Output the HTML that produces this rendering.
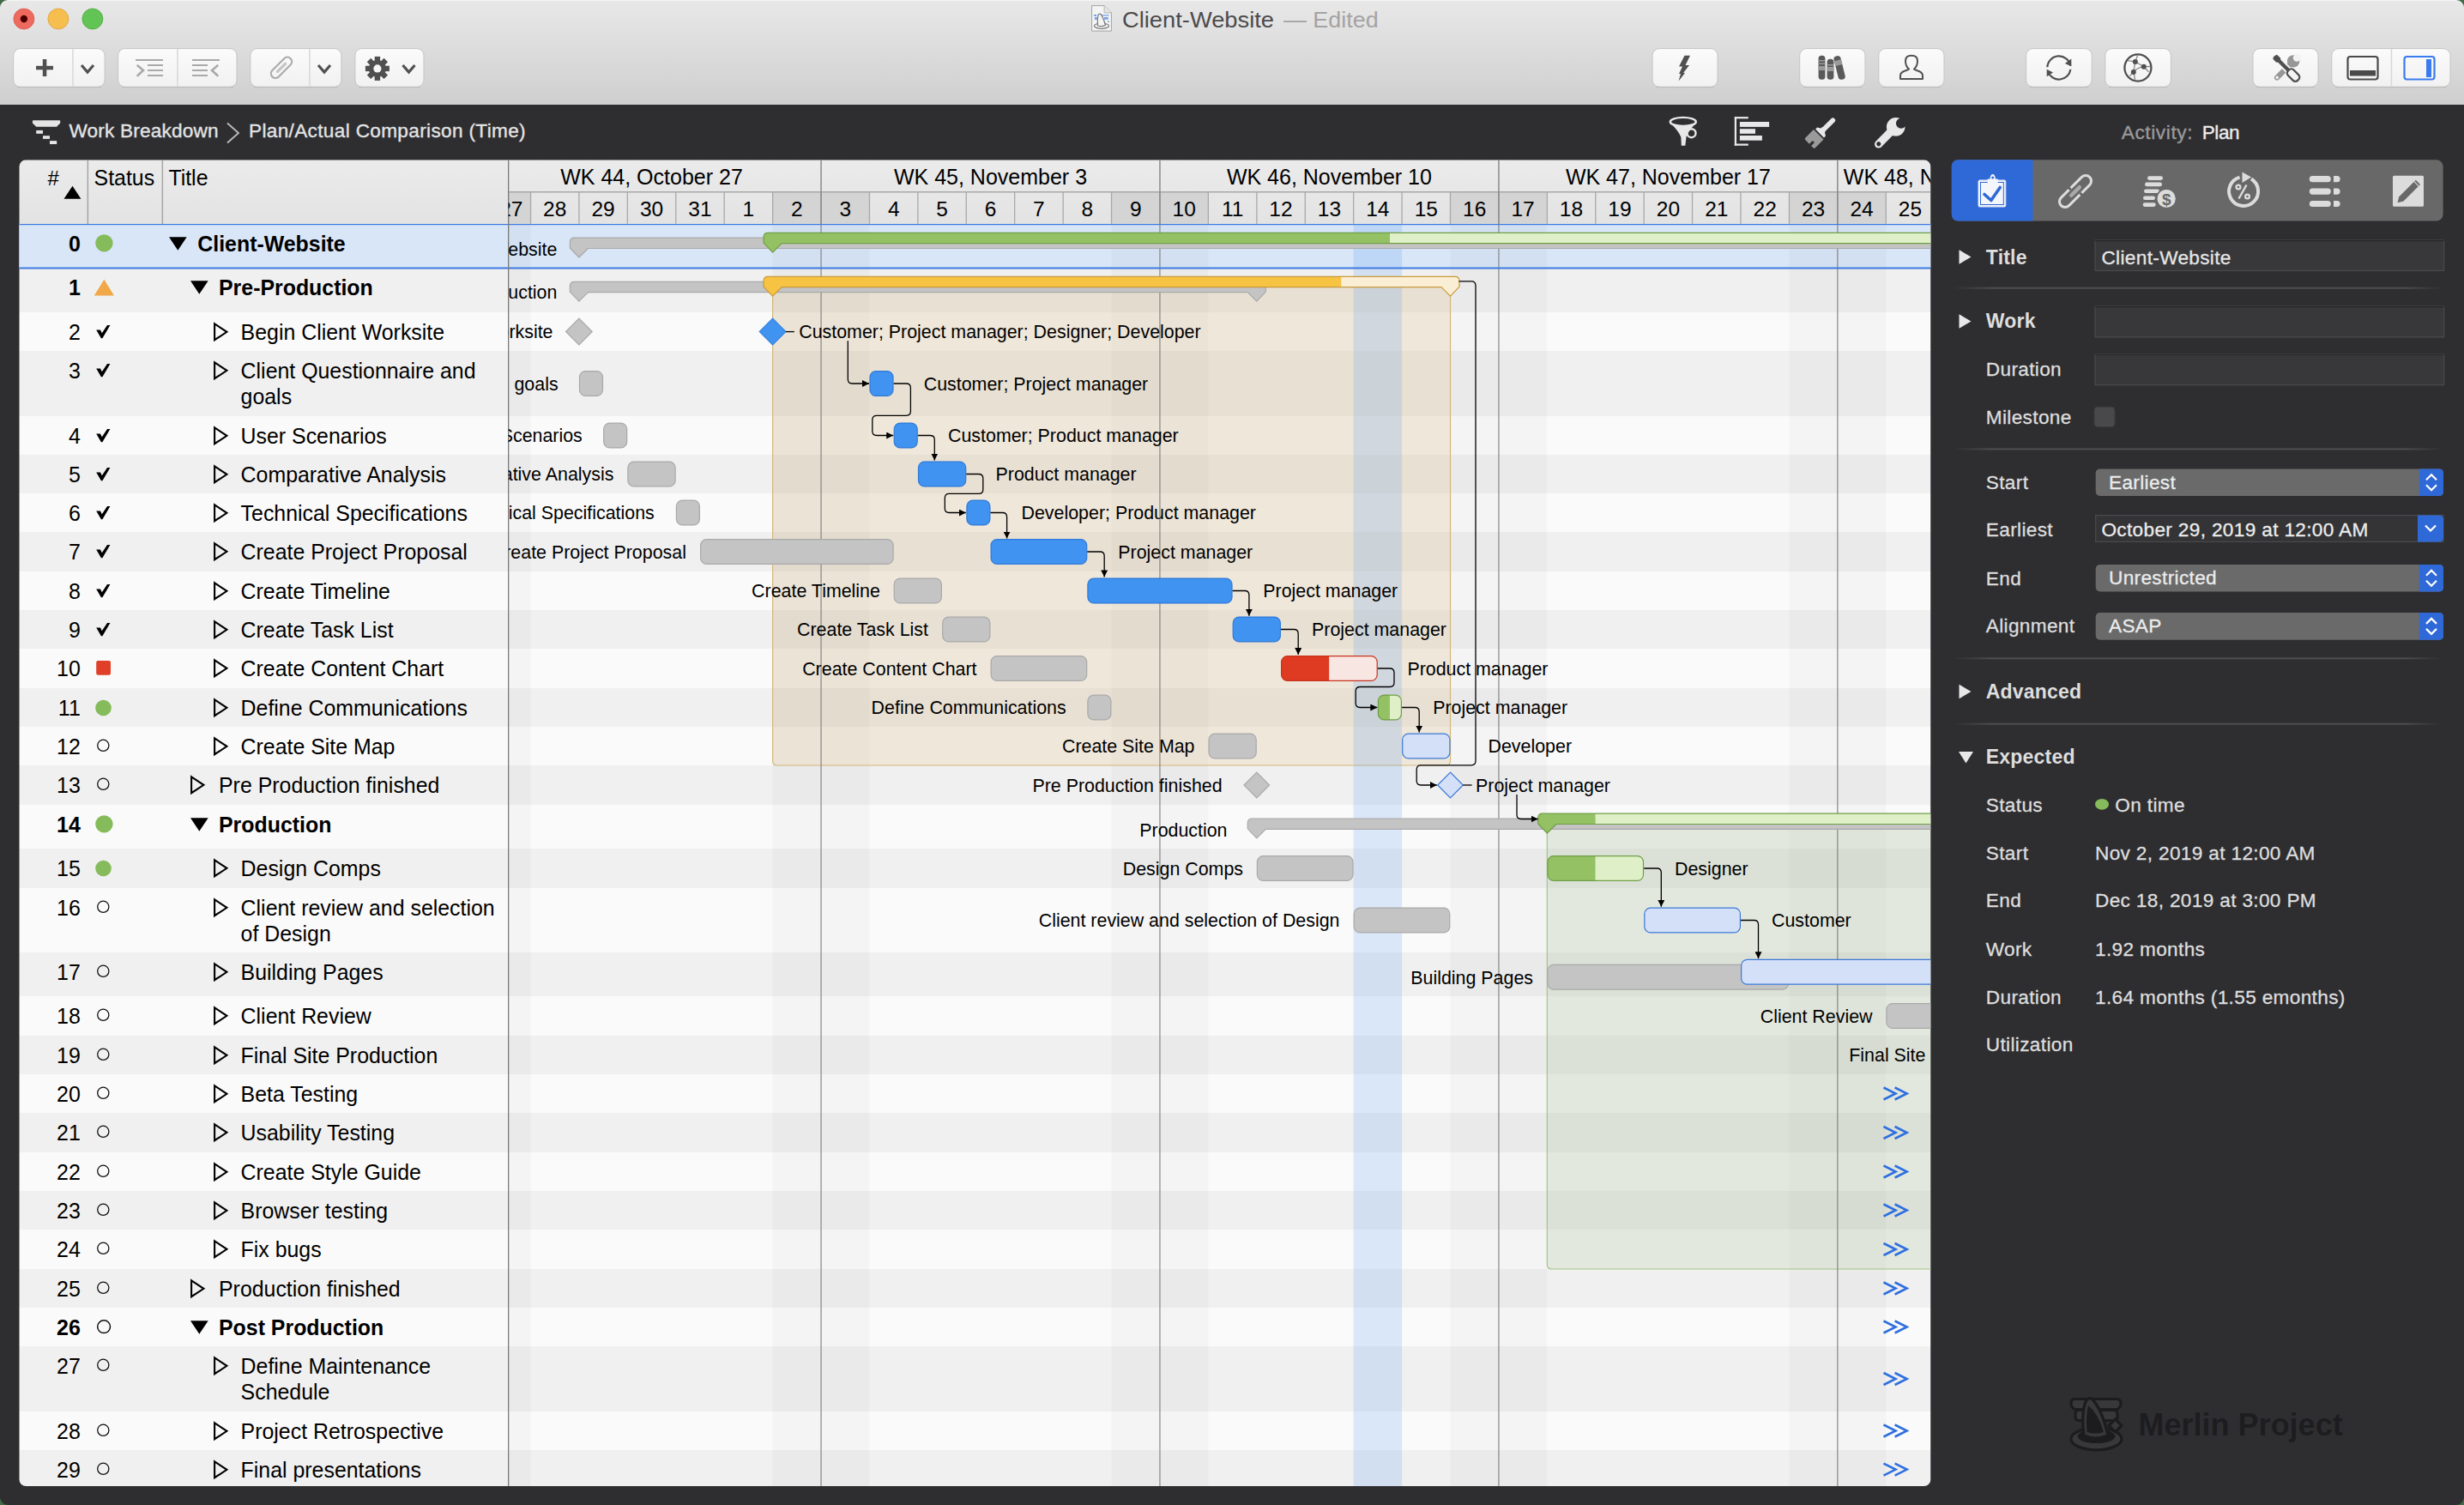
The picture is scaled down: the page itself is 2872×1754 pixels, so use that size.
<!DOCTYPE html><html><head><meta charset="utf-8"><style>
html,body{margin:0;padding:0;width:2872px;height:1754px;overflow:hidden;background:#2e2e31;}
svg{display:block;position:absolute;left:0;top:0}
</style></head><body>
<svg width="2872" height="1754" viewBox="0 0 2872 1754" font-family='"Liberation Sans", sans-serif'>
<defs>
<linearGradient id="tbg" x1="0" y1="0" x2="0" y2="1"><stop offset="0" stop-color="#e9e8e9"/><stop offset="1" stop-color="#d0cfd0"/></linearGradient>
<linearGradient id="btn" x1="0" y1="0" x2="0" y2="1"><stop offset="0" stop-color="#fbfbfb"/><stop offset="1" stop-color="#f1f1f1"/></linearGradient>
<linearGradient id="hdr" x1="0" y1="0" x2="0" y2="1"><stop offset="0" stop-color="#ebebeb"/><stop offset="1" stop-color="#e3e3e3"/></linearGradient>
<clipPath id="panelclip"><rect x="22.3" y="186.3" width="2228.2" height="1545.7" rx="8" ry="8"/></clipPath>
<clipPath id="ganttclip"><rect x="592.6" y="186.3" width="1657.9" height="1545.7"/></clipPath>
<marker id="arr" viewBox="0 0 10 10" refX="10" refY="5" markerWidth="8" markerHeight="8" markerUnits="userSpaceOnUse" orient="auto"><path d="M0,0 L10,5 L0,10 z" fill="#000"/></marker>
<linearGradient id="sepg" x1="0" y1="0" x2="1" y2="0"><stop offset="0" stop-color="#4e4e50" stop-opacity="0"/><stop offset="0.08" stop-color="#4e4e50"/><stop offset="0.92" stop-color="#4e4e50"/><stop offset="1" stop-color="#4e4e50" stop-opacity="0"/></linearGradient>
</defs>
<rect x="0" y="0" width="2872" height="1754" fill="#2e2e31"/>
<rect x="0" y="0" width="2872" height="122" fill="url(#tbg)"/>
<rect x="0" y="0" width="2872" height="1" fill="#f4f4f4"/>
<circle cx="27.9" cy="22" r="12" fill="#ee6a5f" stroke="#d9574c" stroke-width="0.8"/>
<circle cx="27.9" cy="22" r="4.2" fill="#4d0000"/>
<circle cx="67.9" cy="22" r="12" fill="#f5be4f" stroke="#dba23c" stroke-width="0.8"/>
<circle cx="107.9" cy="22" r="12" fill="#62c454" stroke="#4fa83f" stroke-width="0.8"/>
<rect x="15.6" y="56.6" width="106.5" height="44.7" rx="8" ry="8" fill="url(#btn)" stroke="#c4c4c4" stroke-width="1"/>
<rect x="19.6" y="101.1" width="98.5" height="1.2" rx="1" fill="#b0b0b0" opacity="0.5"/>
<rect x="84.2" y="57.1" width="1.5" height="43.7" fill="#d8d8d8"/>
<rect x="137.6" y="56.6" width="138.4" height="44.7" rx="8" ry="8" fill="url(#btn)" stroke="#c4c4c4" stroke-width="1"/>
<rect x="141.6" y="101.1" width="130.4" height="1.2" rx="1" fill="#b0b0b0" opacity="0.5"/>
<rect x="206.2" y="57.1" width="1.5" height="43.7" fill="#d8d8d8"/>
<rect x="291.8" y="56.6" width="106.1" height="44.7" rx="8" ry="8" fill="url(#btn)" stroke="#c4c4c4" stroke-width="1"/>
<rect x="295.8" y="101.1" width="98.1" height="1.2" rx="1" fill="#b0b0b0" opacity="0.5"/>
<rect x="360.2" y="57.1" width="1.5" height="43.7" fill="#d8d8d8"/>
<rect x="413.9" y="56.6" width="80.1" height="44.7" rx="8" ry="8" fill="url(#btn)" stroke="#c4c4c4" stroke-width="1"/>
<rect x="417.9" y="101.1" width="72.1" height="1.2" rx="1" fill="#b0b0b0" opacity="0.5"/>
<rect x="1926.0" y="56.6" width="76.0" height="44.7" rx="8" ry="8" fill="url(#btn)" stroke="#c4c4c4" stroke-width="1"/>
<rect x="1930.0" y="101.1" width="68.0" height="1.2" rx="1" fill="#b0b0b0" opacity="0.5"/>
<rect x="2097.7" y="56.6" width="76.3" height="44.7" rx="8" ry="8" fill="url(#btn)" stroke="#c4c4c4" stroke-width="1"/>
<rect x="2101.7" y="101.1" width="68.3" height="1.2" rx="1" fill="#b0b0b0" opacity="0.5"/>
<rect x="2189.8" y="56.6" width="76.2" height="44.7" rx="8" ry="8" fill="url(#btn)" stroke="#c4c4c4" stroke-width="1"/>
<rect x="2193.8" y="101.1" width="68.2" height="1.2" rx="1" fill="#b0b0b0" opacity="0.5"/>
<rect x="2361.6" y="56.6" width="76.6" height="44.7" rx="8" ry="8" fill="url(#btn)" stroke="#c4c4c4" stroke-width="1"/>
<rect x="2365.6" y="101.1" width="68.6" height="1.2" rx="1" fill="#b0b0b0" opacity="0.5"/>
<rect x="2453.8" y="56.6" width="76.6" height="44.7" rx="8" ry="8" fill="url(#btn)" stroke="#c4c4c4" stroke-width="1"/>
<rect x="2457.8" y="101.1" width="68.6" height="1.2" rx="1" fill="#b0b0b0" opacity="0.5"/>
<rect x="2626.0" y="56.6" width="76.0" height="44.7" rx="8" ry="8" fill="url(#btn)" stroke="#c4c4c4" stroke-width="1"/>
<rect x="2630.0" y="101.1" width="68.0" height="1.2" rx="1" fill="#b0b0b0" opacity="0.5"/>
<rect x="2717.8" y="56.6" width="138.2" height="44.7" rx="8" ry="8" fill="url(#btn)" stroke="#c4c4c4" stroke-width="1"/>
<rect x="2721.8" y="101.1" width="130.2" height="1.2" rx="1" fill="#b0b0b0" opacity="0.5"/>
<rect x="2786.7" y="57.1" width="1.5" height="43.7" fill="#d8d8d8"/>
<rect x="42" y="76.8" width="20" height="4.5" fill="#505050"/>
<rect x="49.8" y="69" width="4.5" height="20" fill="#505050"/>
<path d="M95.0,75.9 L102.0,84.1 L109.0,75.9" fill="none" stroke="#505050" stroke-width="3.1" stroke-linecap="butt" stroke-linejoin="miter"/>
<path d="M371.0,75.9 L378.0,84.1 L385.0,75.9" fill="none" stroke="#505050" stroke-width="3.1" stroke-linecap="butt" stroke-linejoin="miter"/>
<path d="M469.5,75.9 L476.5,84.1 L483.5,75.9" fill="none" stroke="#505050" stroke-width="3.1" stroke-linecap="butt" stroke-linejoin="miter"/>
<rect x="158" y="69" width="32" height="2" fill="#a9a9a9"/>
<rect x="172" y="75" width="18" height="2" fill="#a9a9a9"/>
<rect x="172" y="81" width="18" height="2" fill="#a9a9a9"/>
<rect x="172" y="87" width="18" height="2" fill="#a9a9a9"/>
<path d="M160.5,76.5 L167,82 L160.5,88" fill="none" stroke="#a9a9a9" stroke-width="2.6" stroke-linecap="round"/>
<rect x="224" y="69" width="32" height="2" fill="#a9a9a9"/>
<rect x="224" y="75" width="18" height="2" fill="#a9a9a9"/>
<rect x="224" y="81" width="18" height="2" fill="#a9a9a9"/>
<rect x="224" y="87" width="18" height="2" fill="#a9a9a9"/>
<path d="M253.5,76.5 L247,82 L253.5,88" fill="none" stroke="#a9a9a9" stroke-width="2.6" stroke-linecap="round"/>
<g transform="translate(328,78.8) rotate(-45)"><rect x="-15" y="-5.2" width="30" height="10.4" rx="5.2" fill="none" stroke="#ababab" stroke-width="2.2"/><rect x="-8" y="-1.6" width="16" height="3.2" rx="1.6" fill="#c4c4c4"/></g>
<g fill="#505050"><circle cx="439.9" cy="79.9" r="10.0"/><rect x="436.7" y="65.9" width="6.4" height="14.0" transform="rotate(0.0 439.9 79.9)"/><rect x="436.7" y="65.9" width="6.4" height="14.0" transform="rotate(45.0 439.9 79.9)"/><rect x="436.7" y="65.9" width="6.4" height="14.0" transform="rotate(90.0 439.9 79.9)"/><rect x="436.7" y="65.9" width="6.4" height="14.0" transform="rotate(135.0 439.9 79.9)"/><rect x="436.7" y="65.9" width="6.4" height="14.0" transform="rotate(180.0 439.9 79.9)"/><rect x="436.7" y="65.9" width="6.4" height="14.0" transform="rotate(225.0 439.9 79.9)"/><rect x="436.7" y="65.9" width="6.4" height="14.0" transform="rotate(270.0 439.9 79.9)"/><rect x="436.7" y="65.9" width="6.4" height="14.0" transform="rotate(315.0 439.9 79.9)"/></g><circle cx="439.9" cy="79.9" r="4.6" fill="#f6f6f6"/>
<path d="M1963.5,64.7 L1970,64.7 L1964.5,76 L1969,76 L1962,85 L1964,85 L1956.5,94.4 L1959,86 L1957,86 L1961,77.5 L1957,77.5 Z" fill="#505050"/>
<rect x="2119.6" y="64.7" width="7.8" height="28" rx="3.5" fill="#5a5a5a"/>
<rect x="2119.6" y="70" width="7.8" height="1.5" fill="#9a9a9a"/><rect x="2119.6" y="73.5" width="7.8" height="1.5" fill="#9a9a9a"/><rect x="2119.6" y="77" width="7.8" height="5" fill="#9a9a9a"/>
<rect x="2129.6" y="68.8" width="7.8" height="24" rx="3.5" fill="#5a5a5a"/>
<rect x="2129.6" y="75" width="7.8" height="1.5" fill="#9a9a9a"/><rect x="2129.6" y="78" width="7.8" height="5" fill="#9a9a9a"/>
<g transform="rotate(-14 2144 79)"><rect x="2140" y="65" width="8.2" height="28" rx="3.5" fill="#5a5a5a"/><rect x="2140" y="70" width="8.2" height="6" fill="#9a9a9a"/></g>
<path d="M2215,92 L2215,88 Q2215,84 2222,82 L2225,80.5 Q2221,77 2221,71 Q2221,64.7 2228,64.7 Q2235,64.7 2235,71 Q2235,77 2231,80.5 L2234,82 Q2241,84 2241,88 L2241,92 Z" fill="none" stroke="#505050" stroke-width="2" stroke-linejoin="round"/>
<path d="M2386.32,78.29 A13.6,13.6 0 0 1 2413.29,76.64" fill="none" stroke="#505050" stroke-width="2.2"/>
<path d="M2413.37,80.89 A13.6,13.6 0 0 1 2387.12,83.65" fill="none" stroke="#505050" stroke-width="2.2"/>
<path d="M2406.8,73.9 L2414.3,68.6 L2414.3,77.2 Z" fill="#505050"/>
<path d="M2385.7,80.8 L2393,84.6 L2385.7,89.2 Z" fill="#505050"/>
<g fill="none" stroke="#8a8a8a" stroke-width="1.3"><path d="M2488.8,71.9 L2491.6,64.5 M2488.8,71.9 L2479.8,70.6 M2488.8,71.9 L2498.8,77.7 L2506,77.5 M2498.8,77.7 L2504.5,83.8 M2486.8,83.9 Q2491,78.8 2498.8,77.7 M2486.8,83.9 L2488.8,71.9 M2486.8,83.9 L2482.5,88.5 M2486.8,83.9 L2488.6,93"/></g>
<ellipse cx="2491.9" cy="79" rx="15.5" ry="15.6" fill="none" stroke="#505050" stroke-width="2.3"/>
<circle cx="2488.8" cy="71.9" r="3" fill="#505050"/><circle cx="2498.8" cy="77.7" r="3" fill="#505050"/><circle cx="2486.8" cy="83.9" r="3" fill="#505050"/>
<g transform="translate(2665,79.5) rotate(45)"><path d="M-3.1,-6 L-3.1,15.5 A3.1,3.1 0 0 0 3.1,15.5 L3.1,-6 Z" fill="#979797"/><circle cx="0" cy="-11.5" r="7.2" fill="#979797"/><circle cx="0" cy="-17.2" r="4.4" fill="#f3f3f3"/><rect x="-2.2" y="-22" width="4.4" height="5" fill="#f3f3f3"/><circle cx="0" cy="15.3" r="1.7" fill="#f3f3f3"/></g>
<g transform="translate(2665,79.5) rotate(-45)"><path d="M0,-10 L0,4" stroke="#f3f3f3" stroke-width="8"/><path d="M-3.4,-19 Q0,-21 3.4,-19 L3.6,-13.5 L2.1,-11.5 L-2.1,-11.5 L-3.6,-13.5 Z" fill="#4f4f4f"/><rect x="-2.1" y="-12" width="4.2" height="16" fill="#4f4f4f"/><rect x="-4.6" y="3.5" width="9.2" height="15.8" rx="4" fill="#f3f3f3" stroke="#4f4f4f" stroke-width="2.3"/></g>
<rect x="2736.5" y="66" width="35" height="26.5" rx="3" fill="none" stroke="#4a4a4a" stroke-width="2.2"/>
<rect x="2739" y="82" width="30" height="6.5" fill="#4a4a4a"/>
<rect x="2802.5" y="66" width="35" height="26.5" rx="3" fill="none" stroke="#3a7cf0" stroke-width="2.2"/>
<rect x="2828" y="69" width="6" height="21" fill="#3a7cf0"/>
<path d="M1272.6,6.6 L1287.1,6.6 L1295.4,14.9 L1295.4,36.1 L1272.6,36.1 Z" fill="#f4f4f4" stroke="#9a9a9a" stroke-width="0.9"/>
<path d="M1287.1,6.6 L1287.1,14.9 L1295.4,14.9" fill="#e6e6e6" stroke="#a8a8a8" stroke-width="0.8"/>
<g fill="#7aa2e8"><rect x="1275.1" y="16.9" width="2.9" height="2.1"/><rect x="1284.1" y="17.2" width="8.5" height="1.3"/><rect x="1275.9" y="20" width="2.9" height="3"/><rect x="1287" y="20" width="4.8" height="2.7"/><rect x="1291" y="24.3" width="1.9" height="1.6"/></g>
<ellipse cx="1284" cy="30.2" rx="8.6" ry="3.1" fill="none" stroke="#7a7a7a" stroke-width="1.2"/>
<path d="M1279.5,30 Q1279,21 1280,17.5 Q1281,15.5 1283,16.5 Q1286,20 1288.5,29.5 Q1284,31.5 1279.5,30 Z" fill="#f4f4f4" stroke="#7a7a7a" stroke-width="1.2"/>
<text x="1308" y="32.1" font-size="26.5" fill="#4b4b4b" textLength="177" lengthAdjust="spacingAndGlyphs">Client-Website</text>
<text x="1496" y="32.1" font-size="26.5" fill="#a3a3a3" textLength="110.6" lengthAdjust="spacingAndGlyphs">— Edited</text>
<path d="M38.8,140.3 L69.4,140.3 Q70.2,140.3 70.2,141.1 L70.2,143.4 L66,147.7 L42.2,147.7 L37.9,143.4 L37.9,141.1 Q37.9,140.3 38.8,140.3 Z" fill="#e4e4e4"/>
<g fill="#e4e4e4"><rect x="42.2" y="151.9" width="7.8" height="3.9"/><rect x="50" y="158.2" width="8" height="3.7"/><rect x="58" y="164.1" width="8.2" height="3.9"/></g>
<text x="80.4" y="160.1" font-size="22.6" letter-spacing="0.19" fill="#e4e4e4" stroke="#e4e4e4" stroke-width="0.35">Work Breakdown</text>
<path d="M265,143.5 L278,155 L265,166.5" fill="none" stroke="#bdbdbd" stroke-width="1.8"/>
<text x="290" y="160.1" font-size="22.6" letter-spacing="0.34" fill="#e4e4e4" stroke="#e4e4e4" stroke-width="0.35">Plan/Actual Comparison (Time)</text>
<text x="2472.8" y="161.7" font-size="22.6" letter-spacing="0.6" fill="#9a9a9a" stroke="#9a9a9a" stroke-width="0.35">Activity:</text>
<text x="2566.8" y="161.7" font-size="22.6" letter-spacing="-0.5" fill="#ececec" stroke="#ececec" stroke-width="0.35">Plan</text>
<g clip-path="url(#panelclip)">
<rect x="22.3" y="261.0" width="2228.2" height="51.0" fill="#fafafa"/>
<rect x="22.3" y="312.0" width="2228.2" height="52.0" fill="#f0f0f0"/>
<rect x="22.3" y="364.0" width="2228.2" height="45.0" fill="#fafafa"/>
<rect x="22.3" y="409.0" width="2228.2" height="76.0" fill="#f0f0f0"/>
<rect x="22.3" y="485.0" width="2228.2" height="45.0" fill="#fafafa"/>
<rect x="22.3" y="530.0" width="2228.2" height="45.0" fill="#f0f0f0"/>
<rect x="22.3" y="575.0" width="2228.2" height="45.0" fill="#fafafa"/>
<rect x="22.3" y="620.0" width="2228.2" height="46.0" fill="#f0f0f0"/>
<rect x="22.3" y="666.0" width="2228.2" height="45.0" fill="#fafafa"/>
<rect x="22.3" y="711.0" width="2228.2" height="45.0" fill="#f0f0f0"/>
<rect x="22.3" y="756.0" width="2228.2" height="46.0" fill="#fafafa"/>
<rect x="22.3" y="802.0" width="2228.2" height="45.0" fill="#f0f0f0"/>
<rect x="22.3" y="847.0" width="2228.2" height="45.0" fill="#fafafa"/>
<rect x="22.3" y="892.0" width="2228.2" height="46.0" fill="#f0f0f0"/>
<rect x="22.3" y="938.0" width="2228.2" height="51.0" fill="#fafafa"/>
<rect x="22.3" y="989.0" width="2228.2" height="46.0" fill="#f0f0f0"/>
<rect x="22.3" y="1035.0" width="2228.2" height="75.0" fill="#fafafa"/>
<rect x="22.3" y="1110.0" width="2228.2" height="51.0" fill="#f0f0f0"/>
<rect x="22.3" y="1161.0" width="2228.2" height="46.0" fill="#fafafa"/>
<rect x="22.3" y="1207.0" width="2228.2" height="45.0" fill="#f0f0f0"/>
<rect x="22.3" y="1252.0" width="2228.2" height="45.0" fill="#fafafa"/>
<rect x="22.3" y="1297.0" width="2228.2" height="46.0" fill="#f0f0f0"/>
<rect x="22.3" y="1343.0" width="2228.2" height="45.0" fill="#fafafa"/>
<rect x="22.3" y="1388.0" width="2228.2" height="45.0" fill="#f0f0f0"/>
<rect x="22.3" y="1433.0" width="2228.2" height="46.0" fill="#fafafa"/>
<rect x="22.3" y="1479.0" width="2228.2" height="45.0" fill="#f0f0f0"/>
<rect x="22.3" y="1524.0" width="2228.2" height="45.0" fill="#fafafa"/>
<rect x="22.3" y="1569.0" width="2228.2" height="76.0" fill="#f0f0f0"/>
<rect x="22.3" y="1645.0" width="2228.2" height="45.0" fill="#fafafa"/>
<rect x="22.3" y="1690.0" width="2228.2" height="70.0" fill="#f0f0f0"/>
<rect x="22.3" y="261.0" width="2228.2" height="51.0" fill="#d8e6f8"/>
<g clip-path="url(#ganttclip)">
<rect x="562.1" y="261" width="56.42" height="1480" fill="#000" opacity="0.025"/>
<rect x="900.6" y="261" width="56.42" height="1480" fill="#000" opacity="0.025"/>
<rect x="957.0" y="261" width="56.42" height="1480" fill="#000" opacity="0.025"/>
<rect x="1295.5" y="261" width="56.42" height="1480" fill="#000" opacity="0.025"/>
<rect x="1352.0" y="261" width="56.42" height="1480" fill="#000" opacity="0.025"/>
<rect x="1690.5" y="261" width="56.42" height="1480" fill="#000" opacity="0.025"/>
<rect x="1746.9" y="261" width="56.42" height="1480" fill="#000" opacity="0.025"/>
<rect x="2085.4" y="261" width="56.42" height="1480" fill="#000" opacity="0.025"/>
<rect x="2141.8" y="261" width="56.42" height="1480" fill="#000" opacity="0.025"/>
</g>
<path d="M900.6,334.4 L1690.5,334.4 L1690.5,887.0 Q1690.5,892.0 1685.5,892.0 L905.6,892.0 Q900.6,892.0 900.6,887.0 Z" fill="#d0b07c" fill-opacity="0.25" stroke="#d4b77a" stroke-width="1.2"/>
<path d="M1803.3,966 L2255.5,966 L2255.5,1479.0 L1808.3,1479.0 Q1803.3,1479.0 1803.3,1474.0 Z" fill="#9ab28a" fill-opacity="0.25" stroke="#a4c488" stroke-width="1.2"/>
<rect x="1577.6" y="261" width="56.42" height="1480" fill="#5a9bf0" opacity="0.2"/>
<rect x="956.5" y="187" width="1.1" height="1550" fill="#7c7c7c"/>
<rect x="1351.4" y="187" width="1.1" height="1550" fill="#7c7c7c"/>
<rect x="1746.4" y="187" width="1.1" height="1550" fill="#7c7c7c"/>
<rect x="2141.3" y="187" width="1.1" height="1550" fill="#7c7c7c"/>
<rect x="22.3" y="260.2" width="2228.2" height="2" fill="#3d7ae0"/>
<rect x="22.3" y="311.5" width="2228.2" height="2" fill="#3d7ae0"/>
<rect x="22.3" y="186.3" width="2228.2" height="74.7" fill="url(#hdr)"/>
<g clip-path="url(#ganttclip)">
<rect x="562.1" y="223.8" width="56.42" height="37" fill="#d4d4d4"/>
<rect x="900.6" y="223.8" width="56.42" height="37" fill="#d4d4d4"/>
<rect x="957.0" y="223.8" width="56.42" height="37" fill="#d4d4d4"/>
<rect x="1295.5" y="223.8" width="56.42" height="37" fill="#d4d4d4"/>
<rect x="1352.0" y="223.8" width="56.42" height="37" fill="#d4d4d4"/>
<rect x="1690.5" y="223.8" width="56.42" height="37" fill="#d4d4d4"/>
<rect x="1746.9" y="223.8" width="56.42" height="37" fill="#d4d4d4"/>
<rect x="2085.4" y="223.8" width="56.42" height="37" fill="#d4d4d4"/>
<rect x="2141.8" y="223.8" width="56.42" height="37" fill="#d4d4d4"/>
</g>
<rect x="101.6" y="187" width="1.5" height="74" fill="#a5a5a5"/>
<rect x="188.6" y="187" width="1.5" height="74" fill="#a5a5a5"/>
<rect x="592.6" y="223" width="1657.9" height="1.5" fill="#a8a8a8"/>
<rect x="617.9" y="223.8" width="1.3" height="37" fill="#a9a9a9"/>
<rect x="674.3" y="223.8" width="1.3" height="37" fill="#a9a9a9"/>
<rect x="730.7" y="223.8" width="1.3" height="37" fill="#a9a9a9"/>
<rect x="787.1" y="223.8" width="1.3" height="37" fill="#a9a9a9"/>
<rect x="843.5" y="223.8" width="1.3" height="37" fill="#a9a9a9"/>
<rect x="900.0" y="223.8" width="1.3" height="37" fill="#a9a9a9"/>
<rect x="956.4" y="223.8" width="1.3" height="37" fill="#a9a9a9"/>
<rect x="1012.8" y="223.8" width="1.3" height="37" fill="#a9a9a9"/>
<rect x="1069.2" y="223.8" width="1.3" height="37" fill="#a9a9a9"/>
<rect x="1125.6" y="223.8" width="1.3" height="37" fill="#a9a9a9"/>
<rect x="1182.0" y="223.8" width="1.3" height="37" fill="#a9a9a9"/>
<rect x="1238.5" y="223.8" width="1.3" height="37" fill="#a9a9a9"/>
<rect x="1294.9" y="223.8" width="1.3" height="37" fill="#a9a9a9"/>
<rect x="1351.3" y="223.8" width="1.3" height="37" fill="#a9a9a9"/>
<rect x="1407.7" y="223.8" width="1.3" height="37" fill="#a9a9a9"/>
<rect x="1464.2" y="223.8" width="1.3" height="37" fill="#a9a9a9"/>
<rect x="1520.6" y="223.8" width="1.3" height="37" fill="#a9a9a9"/>
<rect x="1577.0" y="223.8" width="1.3" height="37" fill="#a9a9a9"/>
<rect x="1633.4" y="223.8" width="1.3" height="37" fill="#a9a9a9"/>
<rect x="1689.8" y="223.8" width="1.3" height="37" fill="#a9a9a9"/>
<rect x="1746.2" y="223.8" width="1.3" height="37" fill="#a9a9a9"/>
<rect x="1802.7" y="223.8" width="1.3" height="37" fill="#a9a9a9"/>
<rect x="1859.1" y="223.8" width="1.3" height="37" fill="#a9a9a9"/>
<rect x="1915.5" y="223.8" width="1.3" height="37" fill="#a9a9a9"/>
<rect x="1971.9" y="223.8" width="1.3" height="37" fill="#a9a9a9"/>
<rect x="2028.3" y="223.8" width="1.3" height="37" fill="#a9a9a9"/>
<rect x="2084.8" y="223.8" width="1.3" height="37" fill="#a9a9a9"/>
<rect x="2141.2" y="223.8" width="1.3" height="37" fill="#a9a9a9"/>
<rect x="2197.6" y="223.8" width="1.3" height="37" fill="#a9a9a9"/>
<rect x="956.3" y="187" width="1.5" height="74" fill="#8a8a8a"/>
<rect x="1351.2" y="187" width="1.5" height="74" fill="#8a8a8a"/>
<rect x="1746.2" y="187" width="1.5" height="74" fill="#8a8a8a"/>
<rect x="2141.1" y="187" width="1.5" height="74" fill="#8a8a8a"/>
<rect x="592.0" y="187" width="1.3" height="1550" fill="#7a7a7a"/>
<text x="55.5" y="215.6" font-size="24" fill="#000">#</text>
<path d="M74.5,231.7 L84.5,216.8 L94.4,231.7 Z" fill="#000"/>
<text x="109.6" y="215.6" font-size="24.9" fill="#000">Status</text>
<text x="196.4" y="215.6" font-size="24.9" fill="#000">Title</text>
<g clip-path="url(#ganttclip)">
<text x="759.5" y="215.3" font-size="25" fill="#000" text-anchor="middle">WK 44, October 27</text>
<text x="1154.5" y="215.3" font-size="25" fill="#000" text-anchor="middle">WK 45, November 3</text>
<text x="1549.4" y="215.3" font-size="25" fill="#000" text-anchor="middle">WK 46, November 10</text>
<text x="1944.4" y="215.3" font-size="25" fill="#000" text-anchor="middle">WK 47, November 17</text>
<text x="2148.8" y="215.3" font-size="25" fill="#000">WK 48, November 24</text>
<text x="595.8" y="252.3" font-size="24.5" fill="#000" text-anchor="middle">27</text>
<text x="646.7" y="252.3" font-size="24.5" fill="#000" text-anchor="middle">28</text>
<text x="703.1" y="252.3" font-size="24.5" fill="#000" text-anchor="middle">29</text>
<text x="759.6" y="252.3" font-size="24.5" fill="#000" text-anchor="middle">30</text>
<text x="816.0" y="252.3" font-size="24.5" fill="#000" text-anchor="middle">31</text>
<text x="872.4" y="252.3" font-size="24.5" fill="#000" text-anchor="middle">1</text>
<text x="928.8" y="252.3" font-size="24.5" fill="#000" text-anchor="middle">2</text>
<text x="985.2" y="252.3" font-size="24.5" fill="#000" text-anchor="middle">3</text>
<text x="1041.7" y="252.3" font-size="24.5" fill="#000" text-anchor="middle">4</text>
<text x="1098.1" y="252.3" font-size="24.5" fill="#000" text-anchor="middle">5</text>
<text x="1154.5" y="252.3" font-size="24.5" fill="#000" text-anchor="middle">6</text>
<text x="1210.9" y="252.3" font-size="24.5" fill="#000" text-anchor="middle">7</text>
<text x="1267.3" y="252.3" font-size="24.5" fill="#000" text-anchor="middle">8</text>
<text x="1323.8" y="252.3" font-size="24.5" fill="#000" text-anchor="middle">9</text>
<text x="1380.2" y="252.3" font-size="24.5" fill="#000" text-anchor="middle">10</text>
<text x="1436.6" y="252.3" font-size="24.5" fill="#000" text-anchor="middle">11</text>
<text x="1493.0" y="252.3" font-size="24.5" fill="#000" text-anchor="middle">12</text>
<text x="1549.4" y="252.3" font-size="24.5" fill="#000" text-anchor="middle">13</text>
<text x="1605.8" y="252.3" font-size="24.5" fill="#000" text-anchor="middle">14</text>
<text x="1662.3" y="252.3" font-size="24.5" fill="#000" text-anchor="middle">15</text>
<text x="1718.7" y="252.3" font-size="24.5" fill="#000" text-anchor="middle">16</text>
<text x="1775.1" y="252.3" font-size="24.5" fill="#000" text-anchor="middle">17</text>
<text x="1831.5" y="252.3" font-size="24.5" fill="#000" text-anchor="middle">18</text>
<text x="1888.0" y="252.3" font-size="24.5" fill="#000" text-anchor="middle">19</text>
<text x="1944.4" y="252.3" font-size="24.5" fill="#000" text-anchor="middle">20</text>
<text x="2000.8" y="252.3" font-size="24.5" fill="#000" text-anchor="middle">21</text>
<text x="2057.2" y="252.3" font-size="24.5" fill="#000" text-anchor="middle">22</text>
<text x="2113.6" y="252.3" font-size="24.5" fill="#000" text-anchor="middle">23</text>
<text x="2170.1" y="252.3" font-size="24.5" fill="#000" text-anchor="middle">24</text>
<text x="2226.5" y="252.3" font-size="24.5" fill="#000" text-anchor="middle">25</text>
</g>
<text x="93.8" y="293.0" font-size="25" text-anchor="end" font-weight="bold" fill="#000">0</text>
<circle cx="121.4" cy="283.4" r="10.2" fill="#86bb5b"/>
<path d="M197.0,276.2 L217.7,276.2 L207.3,291.8 Z" fill="#000"/>
<text x="230.3" y="293.0" font-size="24.9" font-weight="bold" fill="#000">Client-Website</text>
<text x="93.8" y="344.0" font-size="25" text-anchor="end" font-weight="bold" fill="#000">1</text>
<path d="M109.8,344.4 L121.4,325.8 L133,344.4 Z" fill="#f0a848"/>
<path d="M222.0,327.2 L242.7,327.2 L232.3,342.8 Z" fill="#000"/>
<text x="255.0" y="344.0" font-size="24.9" font-weight="bold" fill="#000">Pre-Production</text>
<text x="93.8" y="396.0" font-size="25" text-anchor="end" fill="#000">2</text>
<path d="M112.2,384.6 L117,384.6 L118.8,388.2 L125,379.0 L128.4,379.0 L119.4,394.2 L117.9,394.2 Z" fill="#000"/>
<path d="M250.1,377.3 L264.4,386.8 L250.1,396.2 Z" fill="none" stroke="#000" stroke-width="2.1" stroke-linejoin="miter"/>
<text x="280.6" y="396.0" font-size="24.9" fill="#000">Begin Client Worksite</text>
<text x="93.8" y="441.0" font-size="25" text-anchor="end" fill="#000">3</text>
<path d="M112.2,429.6 L117,429.6 L118.8,433.2 L125,424.0 L128.4,424.0 L119.4,439.2 L117.9,439.2 Z" fill="#000"/>
<path d="M250.1,422.3 L264.4,431.8 L250.1,441.2 Z" fill="none" stroke="#000" stroke-width="2.1" stroke-linejoin="miter"/>
<text x="280.6" y="441.0" font-size="24.9" fill="#000">Client Questionnaire and</text>
<text x="280.6" y="471.2" font-size="24.9" fill="#000">goals</text>
<text x="93.8" y="517.0" font-size="25" text-anchor="end" fill="#000">4</text>
<path d="M112.2,505.6 L117,505.6 L118.8,509.2 L125,500.0 L128.4,500.0 L119.4,515.2 L117.9,515.2 Z" fill="#000"/>
<path d="M250.1,498.3 L264.4,507.8 L250.1,517.2 Z" fill="none" stroke="#000" stroke-width="2.1" stroke-linejoin="miter"/>
<text x="280.6" y="517.0" font-size="24.9" fill="#000">User Scenarios</text>
<text x="93.8" y="562.0" font-size="25" text-anchor="end" fill="#000">5</text>
<path d="M112.2,550.6 L117,550.6 L118.8,554.2 L125,545.0 L128.4,545.0 L119.4,560.2 L117.9,560.2 Z" fill="#000"/>
<path d="M250.1,543.3 L264.4,552.8 L250.1,562.2 Z" fill="none" stroke="#000" stroke-width="2.1" stroke-linejoin="miter"/>
<text x="280.6" y="562.0" font-size="24.9" fill="#000">Comparative Analysis</text>
<text x="93.8" y="607.0" font-size="25" text-anchor="end" fill="#000">6</text>
<path d="M112.2,595.6 L117,595.6 L118.8,599.2 L125,590.0 L128.4,590.0 L119.4,605.2 L117.9,605.2 Z" fill="#000"/>
<path d="M250.1,588.3 L264.4,597.8 L250.1,607.2 Z" fill="none" stroke="#000" stroke-width="2.1" stroke-linejoin="miter"/>
<text x="280.6" y="607.0" font-size="24.9" fill="#000">Technical Specifications</text>
<text x="93.8" y="652.0" font-size="25" text-anchor="end" fill="#000">7</text>
<path d="M112.2,640.6 L117,640.6 L118.8,644.2 L125,635.0 L128.4,635.0 L119.4,650.2 L117.9,650.2 Z" fill="#000"/>
<path d="M250.1,633.3 L264.4,642.8 L250.1,652.2 Z" fill="none" stroke="#000" stroke-width="2.1" stroke-linejoin="miter"/>
<text x="280.6" y="652.0" font-size="24.9" fill="#000">Create Project Proposal</text>
<text x="93.8" y="698.0" font-size="25" text-anchor="end" fill="#000">8</text>
<path d="M112.2,686.6 L117,686.6 L118.8,690.2 L125,681.0 L128.4,681.0 L119.4,696.2 L117.9,696.2 Z" fill="#000"/>
<path d="M250.1,679.3 L264.4,688.8 L250.1,698.2 Z" fill="none" stroke="#000" stroke-width="2.1" stroke-linejoin="miter"/>
<text x="280.6" y="698.0" font-size="24.9" fill="#000">Create Timeline</text>
<text x="93.8" y="743.0" font-size="25" text-anchor="end" fill="#000">9</text>
<path d="M112.2,731.6 L117,731.6 L118.8,735.2 L125,726.0 L128.4,726.0 L119.4,741.2 L117.9,741.2 Z" fill="#000"/>
<path d="M250.1,724.3 L264.4,733.8 L250.1,743.2 Z" fill="none" stroke="#000" stroke-width="2.1" stroke-linejoin="miter"/>
<text x="280.6" y="743.0" font-size="24.9" fill="#000">Create Task List</text>
<text x="93.8" y="788.0" font-size="25" text-anchor="end" fill="#000">10</text>
<rect x="112.2" y="770.0" width="16.8" height="16.8" rx="2" fill="#e0402a"/>
<path d="M250.1,769.3 L264.4,778.8 L250.1,788.2 Z" fill="none" stroke="#000" stroke-width="2.1" stroke-linejoin="miter"/>
<text x="280.6" y="788.0" font-size="24.9" fill="#000">Create Content Chart</text>
<text x="93.8" y="834.0" font-size="25" text-anchor="end" fill="#000">11</text>
<circle cx="120.5" cy="825.0" r="9.3" fill="#86bb5b"/>
<path d="M250.1,815.3 L264.4,824.8 L250.1,834.2 Z" fill="none" stroke="#000" stroke-width="2.1" stroke-linejoin="miter"/>
<text x="280.6" y="834.0" font-size="24.9" fill="#000">Define Communications</text>
<text x="93.8" y="879.0" font-size="25" text-anchor="end" fill="#000">12</text>
<circle cx="120.3" cy="868.8" r="6.6" fill="none" stroke="#111" stroke-width="1.3"/>
<path d="M250.1,860.3 L264.4,869.8 L250.1,879.2 Z" fill="none" stroke="#000" stroke-width="2.1" stroke-linejoin="miter"/>
<text x="280.6" y="879.0" font-size="24.9" fill="#000">Create Site Map</text>
<text x="93.8" y="924.0" font-size="25" text-anchor="end" fill="#000">13</text>
<circle cx="120.3" cy="913.8" r="6.6" fill="none" stroke="#111" stroke-width="1.3"/>
<path d="M223.1,905.3 L237.4,914.8 L223.1,924.2 Z" fill="none" stroke="#000" stroke-width="2.1" stroke-linejoin="miter"/>
<text x="255.0" y="924.0" font-size="24.9" fill="#000">Pre Production finished</text>
<text x="93.8" y="970.0" font-size="25" text-anchor="end" font-weight="bold" fill="#000">14</text>
<circle cx="121.4" cy="960.4" r="10.2" fill="#86bb5b"/>
<path d="M222.0,953.2 L242.7,953.2 L232.3,968.8 Z" fill="#000"/>
<text x="255.0" y="970.0" font-size="24.9" font-weight="bold" fill="#000">Production</text>
<text x="93.8" y="1021.0" font-size="25" text-anchor="end" fill="#000">15</text>
<circle cx="120.5" cy="1012.0" r="9.3" fill="#86bb5b"/>
<path d="M250.1,1002.3 L264.4,1011.8 L250.1,1021.2 Z" fill="none" stroke="#000" stroke-width="2.1" stroke-linejoin="miter"/>
<text x="280.6" y="1021.0" font-size="24.9" fill="#000">Design Comps</text>
<text x="93.8" y="1067.0" font-size="25" text-anchor="end" fill="#000">16</text>
<circle cx="120.3" cy="1056.8" r="6.6" fill="none" stroke="#111" stroke-width="1.3"/>
<path d="M250.1,1048.3 L264.4,1057.8 L250.1,1067.2 Z" fill="none" stroke="#000" stroke-width="2.1" stroke-linejoin="miter"/>
<text x="280.6" y="1067.0" font-size="24.9" fill="#000">Client review and selection</text>
<text x="280.6" y="1097.2" font-size="24.9" fill="#000">of Design</text>
<text x="93.8" y="1142.0" font-size="25" text-anchor="end" fill="#000">17</text>
<circle cx="120.3" cy="1131.8" r="6.6" fill="none" stroke="#111" stroke-width="1.3"/>
<path d="M250.1,1123.3 L264.4,1132.8 L250.1,1142.2 Z" fill="none" stroke="#000" stroke-width="2.1" stroke-linejoin="miter"/>
<text x="280.6" y="1142.0" font-size="24.9" fill="#000">Building Pages</text>
<text x="93.8" y="1193.0" font-size="25" text-anchor="end" fill="#000">18</text>
<circle cx="120.3" cy="1182.8" r="6.6" fill="none" stroke="#111" stroke-width="1.3"/>
<path d="M250.1,1174.3 L264.4,1183.8 L250.1,1193.2 Z" fill="none" stroke="#000" stroke-width="2.1" stroke-linejoin="miter"/>
<text x="280.6" y="1193.0" font-size="24.9" fill="#000">Client Review</text>
<text x="93.8" y="1239.0" font-size="25" text-anchor="end" fill="#000">19</text>
<circle cx="120.3" cy="1228.8" r="6.6" fill="none" stroke="#111" stroke-width="1.3"/>
<path d="M250.1,1220.3 L264.4,1229.8 L250.1,1239.2 Z" fill="none" stroke="#000" stroke-width="2.1" stroke-linejoin="miter"/>
<text x="280.6" y="1239.0" font-size="24.9" fill="#000">Final Site Production</text>
<text x="93.8" y="1284.0" font-size="25" text-anchor="end" fill="#000">20</text>
<circle cx="120.3" cy="1273.8" r="6.6" fill="none" stroke="#111" stroke-width="1.3"/>
<path d="M250.1,1265.3 L264.4,1274.8 L250.1,1284.2 Z" fill="none" stroke="#000" stroke-width="2.1" stroke-linejoin="miter"/>
<text x="280.6" y="1284.0" font-size="24.9" fill="#000">Beta Testing</text>
<text x="93.8" y="1329.0" font-size="25" text-anchor="end" fill="#000">21</text>
<circle cx="120.3" cy="1318.8" r="6.6" fill="none" stroke="#111" stroke-width="1.3"/>
<path d="M250.1,1310.3 L264.4,1319.8 L250.1,1329.2 Z" fill="none" stroke="#000" stroke-width="2.1" stroke-linejoin="miter"/>
<text x="280.6" y="1329.0" font-size="24.9" fill="#000">Usability Testing</text>
<text x="93.8" y="1375.0" font-size="25" text-anchor="end" fill="#000">22</text>
<circle cx="120.3" cy="1364.8" r="6.6" fill="none" stroke="#111" stroke-width="1.3"/>
<path d="M250.1,1356.3 L264.4,1365.8 L250.1,1375.2 Z" fill="none" stroke="#000" stroke-width="2.1" stroke-linejoin="miter"/>
<text x="280.6" y="1375.0" font-size="24.9" fill="#000">Create Style Guide</text>
<text x="93.8" y="1420.0" font-size="25" text-anchor="end" fill="#000">23</text>
<circle cx="120.3" cy="1409.8" r="6.6" fill="none" stroke="#111" stroke-width="1.3"/>
<path d="M250.1,1401.3 L264.4,1410.8 L250.1,1420.2 Z" fill="none" stroke="#000" stroke-width="2.1" stroke-linejoin="miter"/>
<text x="280.6" y="1420.0" font-size="24.9" fill="#000">Browser testing</text>
<text x="93.8" y="1465.0" font-size="25" text-anchor="end" fill="#000">24</text>
<circle cx="120.3" cy="1454.8" r="6.6" fill="none" stroke="#111" stroke-width="1.3"/>
<path d="M250.1,1446.3 L264.4,1455.8 L250.1,1465.2 Z" fill="none" stroke="#000" stroke-width="2.1" stroke-linejoin="miter"/>
<text x="280.6" y="1465.0" font-size="24.9" fill="#000">Fix bugs</text>
<text x="93.8" y="1511.0" font-size="25" text-anchor="end" fill="#000">25</text>
<circle cx="120.3" cy="1500.8" r="6.6" fill="none" stroke="#111" stroke-width="1.3"/>
<path d="M223.1,1492.3 L237.4,1501.8 L223.1,1511.2 Z" fill="none" stroke="#000" stroke-width="2.1" stroke-linejoin="miter"/>
<text x="255.0" y="1511.0" font-size="24.9" fill="#000">Production finished</text>
<text x="93.8" y="1556.0" font-size="25" text-anchor="end" font-weight="bold" fill="#000">26</text>
<circle cx="121.1" cy="1546.2" r="7.4" fill="none" stroke="#111" stroke-width="1.5"/>
<path d="M222.0,1539.2 L242.7,1539.2 L232.3,1554.8 Z" fill="#000"/>
<text x="255.0" y="1556.0" font-size="24.9" font-weight="bold" fill="#000">Post Production</text>
<text x="93.8" y="1601.0" font-size="25" text-anchor="end" fill="#000">27</text>
<circle cx="120.3" cy="1590.8" r="6.6" fill="none" stroke="#111" stroke-width="1.3"/>
<path d="M250.1,1582.3 L264.4,1591.8 L250.1,1601.2 Z" fill="none" stroke="#000" stroke-width="2.1" stroke-linejoin="miter"/>
<text x="280.6" y="1601.0" font-size="24.9" fill="#000">Define Maintenance</text>
<text x="280.6" y="1631.2" font-size="24.9" fill="#000">Schedule</text>
<text x="93.8" y="1677.0" font-size="25" text-anchor="end" fill="#000">28</text>
<circle cx="120.3" cy="1666.8" r="6.6" fill="none" stroke="#111" stroke-width="1.3"/>
<path d="M250.1,1658.3 L264.4,1667.8 L250.1,1677.2 Z" fill="none" stroke="#000" stroke-width="2.1" stroke-linejoin="miter"/>
<text x="280.6" y="1677.0" font-size="24.9" fill="#000">Project Retrospective</text>
<text x="93.8" y="1722.0" font-size="25" text-anchor="end" fill="#000">29</text>
<circle cx="120.3" cy="1711.8" r="6.6" fill="none" stroke="#111" stroke-width="1.3"/>
<path d="M250.1,1703.3 L264.4,1712.8 L250.1,1722.2 Z" fill="none" stroke="#000" stroke-width="2.1" stroke-linejoin="miter"/>
<text x="280.6" y="1722.0" font-size="24.9" fill="#000">Final presentations</text>
<g clip-path="url(#ganttclip)">
<path d="M664.4,289.0 L664.4,282.2 Q664.4,277.2 669.4,277.2 L10019.0,277.2 L10019.0,289.5 L685.4,289.5 L674.9,300.0 Z" fill="#c4c4c4" stroke="#a9a9a9" stroke-width="1.2" stroke-linejoin="round"/>
<clipPath id="sc9277"><path d="M890.1,283.1 L890.1,276.3 Q890.1,271.3 895.1,271.3 L10019.0,271.3 L10019.0,283.6 L911.1,283.6 L900.6,294.1 Z"/></clipPath>
<g clip-path="url(#sc9277)"><rect x="880.6" y="266.3" width="739.4" height="40" fill="#93c163"/><rect x="1620.0" y="266.3" width="8419.0" height="40" fill="#dff0c8"/></g>
<path d="M890.1,283.1 L890.1,276.3 Q890.1,271.3 895.1,271.3 L10019.0,271.3 L10019.0,283.6 L911.1,283.6 L900.6,294.1 Z" fill="none" stroke="#6f9e45" stroke-width="1.2" stroke-linejoin="round"/>
<text x="649.4" y="298.1" font-size="21.4" text-anchor="end" fill="#000">Client-Website</text>
<path d="M664.4,340.1 L664.4,333.3 Q664.4,328.3 669.4,328.3 L1470.3,328.3 Q1475.3,328.3 1475.3,333.3 L1475.3,340.1 L1464.8,351.1 L1454.3,340.6 L685.4,340.6 L674.9,351.1 Z" fill="#c4c4c4" stroke="#a9a9a9" stroke-width="1.2" stroke-linejoin="round"/>
<clipPath id="sc9328"><path d="M890.1,334.2 L890.1,327.4 Q890.1,322.4 895.1,322.4 L1696.0,322.4 Q1701.0,322.4 1701.0,327.4 L1701.0,334.2 L1690.5,345.2 L1680.0,334.7 L911.1,334.7 L900.6,345.2 Z"/></clipPath>
<g clip-path="url(#sc9328)"><rect x="880.6" y="317.4" width="682.9" height="40" fill="#f6c342"/><rect x="1563.5" y="317.4" width="166.9" height="40" fill="#faeed5"/></g>
<path d="M890.1,334.2 L890.1,327.4 Q890.1,322.4 895.1,322.4 L1696.0,322.4 Q1701.0,322.4 1701.0,327.4 L1701.0,334.2 L1690.5,345.2 L1680.0,334.7 L911.1,334.7 L900.6,345.2 Z" fill="none" stroke="#c9993a" stroke-width="1.2" stroke-linejoin="round"/>
<text x="649.4" y="348.1" font-size="21.4" text-anchor="end" fill="#000">Pre-Production</text>
<path d="M659.6,386.5 L674.9,371.2 L690.2,386.5 L674.9,401.8 Z" fill="#c4c4c4" stroke="#a9a9a9" stroke-width="1.2"/>
<path d="M885.3,386.5 L900.6,371.2 L915.9,386.5 L900.6,401.8 Z" fill="#4093f0" stroke="#3584e0" stroke-width="1.2"/>
<text x="644.5" y="393.9" font-size="21.4" text-anchor="end" fill="#000">Begin Client Worksite</text>
<path d="M915.9,386.6 L925.8,386.6" fill="none" stroke="#000" stroke-width="1.3"/>
<text x="931.2" y="393.9" font-size="21.4" fill="#000">Customer; Project manager; Designer; Developer</text>
<rect x="675.5" y="432.6" width="27.0" height="28.8" rx="7" ry="7" fill="#c4c4c4" stroke="#a9a9a9" stroke-width="1.2"/>
<rect x="1014.0" y="432.6" width="27.0" height="28.8" rx="7" ry="7" fill="#4093f0" stroke="#2f7ad8" stroke-width="1.2"/>
<text x="650.6" y="454.7" font-size="21.4" text-anchor="end" fill="#000">goals</text>
<text x="1076.7" y="454.7" font-size="21.4" fill="#000">Customer; Project manager</text>
<rect x="703.7" y="493.1" width="27.0" height="28.8" rx="7" ry="7" fill="#c4c4c4" stroke="#a9a9a9" stroke-width="1.2"/>
<rect x="1042.2" y="493.1" width="27.0" height="28.8" rx="7" ry="7" fill="#4093f0" stroke="#2f7ad8" stroke-width="1.2"/>
<text x="678.8" y="515.1" font-size="21.4" text-anchor="end" fill="#000">User Scenarios</text>
<text x="1105.0" y="515.1" font-size="21.4" fill="#000">Customer; Product manager</text>
<rect x="731.9" y="538.1" width="55.2" height="28.8" rx="7" ry="7" fill="#c4c4c4" stroke="#a9a9a9" stroke-width="1.2"/>
<rect x="1070.5" y="538.1" width="55.2" height="28.8" rx="7" ry="7" fill="#4093f0" stroke="#2f7ad8" stroke-width="1.2"/>
<text x="715.4" y="560.1" font-size="21.4" text-anchor="end" fill="#000">Comparative Analysis</text>
<text x="1160.5" y="560.1" font-size="21.4" fill="#000">Product manager</text>
<rect x="788.4" y="583.1" width="27.0" height="28.8" rx="7" ry="7" fill="#c4c4c4" stroke="#a9a9a9" stroke-width="1.2"/>
<rect x="1126.9" y="583.1" width="27.0" height="28.8" rx="7" ry="7" fill="#4093f0" stroke="#2f7ad8" stroke-width="1.2"/>
<text x="762.8" y="605.1" font-size="21.4" text-anchor="end" fill="#000">Technical Specifications</text>
<text x="1190.5" y="605.1" font-size="21.4" fill="#000">Developer; Product manager</text>
<rect x="816.6" y="628.6" width="224.5" height="28.8" rx="7" ry="7" fill="#c4c4c4" stroke="#a9a9a9" stroke-width="1.2"/>
<rect x="1155.1" y="628.6" width="111.6" height="28.8" rx="7" ry="7" fill="#4093f0" stroke="#2f7ad8" stroke-width="1.2"/>
<text x="799.9" y="650.6" font-size="21.4" text-anchor="end" fill="#000">Create Project Proposal</text>
<text x="1303.3" y="650.6" font-size="21.4" fill="#000">Project manager</text>
<rect x="1042.2" y="674.1" width="55.2" height="28.8" rx="7" ry="7" fill="#c4c4c4" stroke="#a9a9a9" stroke-width="1.2"/>
<rect x="1267.9" y="674.1" width="168.1" height="28.8" rx="7" ry="7" fill="#4093f0" stroke="#2f7ad8" stroke-width="1.2"/>
<text x="1025.9" y="696.1" font-size="21.4" text-anchor="end" fill="#000">Create Timeline</text>
<text x="1472.3" y="696.1" font-size="21.4" fill="#000">Project manager</text>
<rect x="1098.7" y="719.1" width="55.2" height="28.8" rx="7" ry="7" fill="#c4c4c4" stroke="#a9a9a9" stroke-width="1.2"/>
<rect x="1437.2" y="719.1" width="55.2" height="28.8" rx="7" ry="7" fill="#4093f0" stroke="#2f7ad8" stroke-width="1.2"/>
<text x="1082.0" y="741.1" font-size="21.4" text-anchor="end" fill="#000">Create Task List</text>
<text x="1529.0" y="741.1" font-size="21.4" fill="#000">Project manager</text>
<rect x="1155.1" y="764.6" width="111.6" height="28.8" rx="7" ry="7" fill="#c4c4c4" stroke="#a9a9a9" stroke-width="1.2"/>
<clipPath id="pc15709"><rect x="1493.6" y="764.6" width="111.6" height="28.8" rx="7" ry="7"/></clipPath>
<g clip-path="url(#pc15709)"><rect x="1493.0" y="764.0" width="56.4" height="30.0" fill="#de3b22"/><rect x="1549.4" y="764.0" width="56.4" height="30.0" fill="#f8e6e3"/></g>
<rect x="1493.6" y="764.6" width="111.6" height="28.8" rx="7" ry="7" fill="none" stroke="#c8321c" stroke-width="1.2"/>
<text x="1138.5" y="786.6" font-size="21.4" text-anchor="end" fill="#000">Create Content Chart</text>
<text x="1640.4" y="786.6" font-size="21.4" fill="#000">Product manager</text>
<rect x="1267.9" y="810.1" width="27.0" height="28.8" rx="7" ry="7" fill="#c4c4c4" stroke="#a9a9a9" stroke-width="1.2"/>
<clipPath id="pc16883"><rect x="1606.4" y="810.1" width="27.0" height="28.8" rx="7" ry="7"/></clipPath>
<g clip-path="url(#pc16883)"><rect x="1605.8" y="809.5" width="14.1" height="30.0" fill="#93c163"/><rect x="1620.0" y="809.5" width="14.1" height="30.0" fill="#dff0c8"/></g>
<rect x="1606.4" y="810.1" width="27.0" height="28.8" rx="7" ry="7" fill="none" stroke="#6f9e45" stroke-width="1.2"/>
<text x="1242.7" y="832.1" font-size="21.4" text-anchor="end" fill="#000">Define Communications</text>
<text x="1670.2" y="832.1" font-size="21.4" fill="#000">Project manager</text>
<rect x="1409.0" y="855.1" width="55.2" height="28.8" rx="7" ry="7" fill="#c4c4c4" stroke="#a9a9a9" stroke-width="1.2"/>
<rect x="1634.7" y="855.1" width="55.2" height="28.8" rx="7" ry="7" fill="#d3e0f7" stroke="#3b78d8" stroke-width="1.2"/>
<text x="1392.5" y="877.1" font-size="21.4" text-anchor="end" fill="#000">Create Site Map</text>
<text x="1734.5" y="877.1" font-size="21.4" fill="#000">Developer</text>
<path d="M1450.0,915.0 L1464.8,900.2 L1479.6,915.0 L1464.8,929.8 Z" fill="#c4c4c4" stroke="#a9a9a9" stroke-width="1.2"/>
<path d="M1675.7,915.0 L1690.5,900.2 L1705.3,915.0 L1690.5,929.8 Z" fill="#d3e0f7" stroke="#3b78d8" stroke-width="1.2"/>
<text x="1424.6" y="922.6" font-size="21.4" text-anchor="end" fill="#000">Pre Production finished</text>
<path d="M1705.3,915.0 L1715.6,915.0" fill="none" stroke="#000" stroke-width="1.3"/>
<text x="1720.0" y="922.6" font-size="21.4" fill="#000">Project manager</text>
<path d="M1454.3,965.8 L1454.3,959.0 Q1454.3,954.0 1459.3,954.0 L10019.0,954.0 L10019.0,966.3 L1475.3,966.3 L1464.8,976.8 Z" fill="#c4c4c4" stroke="#a9a9a9" stroke-width="1.2" stroke-linejoin="round"/>
<clipPath id="sc18981"><path d="M1792.8,960.0 L1792.8,953.2 Q1792.8,948.2 1797.8,948.2 L10019.0,948.2 L10019.0,960.5 L1813.8,960.5 L1803.3,971.0 Z"/></clipPath>
<g clip-path="url(#sc18981)"><rect x="1783.3" y="943.2" width="76.4" height="40" fill="#93c163"/><rect x="1859.7" y="943.2" width="8179.3" height="40" fill="#dff0c8"/></g>
<path d="M1792.8,960.0 L1792.8,953.2 Q1792.8,948.2 1797.8,948.2 L10019.0,948.2 L10019.0,960.5 L1813.8,960.5 L1803.3,971.0 Z" fill="none" stroke="#6f9e45" stroke-width="1.2" stroke-linejoin="round"/>
<text x="1430.5" y="974.6" font-size="21.4" text-anchor="end" fill="#000">Production</text>
<rect x="1465.4" y="997.6" width="111.6" height="28.8" rx="7" ry="7" fill="#c4c4c4" stroke="#a9a9a9" stroke-width="1.2"/>
<clipPath id="pc19045"><rect x="1803.9" y="997.6" width="111.6" height="28.8" rx="7" ry="7"/></clipPath>
<g clip-path="url(#pc19045)"><rect x="1803.3" y="997.0" width="56.4" height="30.0" fill="#93c163"/><rect x="1859.7" y="997.0" width="56.4" height="30.0" fill="#dff0c8"/></g>
<rect x="1803.9" y="997.6" width="111.6" height="28.8" rx="7" ry="7" fill="none" stroke="#6f9e45" stroke-width="1.2"/>
<text x="1449.0" y="1019.6" font-size="21.4" text-anchor="end" fill="#000">Design Comps</text>
<text x="1952.0" y="1019.6" font-size="21.4" fill="#000">Designer</text>
<rect x="1578.2" y="1058.1" width="111.6" height="28.8" rx="7" ry="7" fill="#c4c4c4" stroke="#a9a9a9" stroke-width="1.2"/>
<rect x="1916.8" y="1058.1" width="111.6" height="28.8" rx="7" ry="7" fill="#d3e0f7" stroke="#3b78d8" stroke-width="1.2"/>
<text x="1561.5" y="1080.1" font-size="21.4" text-anchor="end" fill="#000">Client review and selection of Design</text>
<text x="2065.0" y="1080.1" font-size="21.4" fill="#000">Customer</text>
<rect x="1803.9" y="1124.4" width="280.9" height="28.8" rx="7" ry="7" fill="#c4c4c4" stroke="#a9a9a9" stroke-width="1.2"/>
<rect x="2029.6" y="1118.4" width="569.8" height="28.8" rx="7" ry="7" fill="#d3e0f7" stroke="#3b78d8" stroke-width="1.2"/>
<text x="1787.0" y="1147.1" font-size="21.4" text-anchor="end" fill="#000">Building Pages</text>
<rect x="2198.9" y="1169.6" width="400.5" height="28.8" rx="7" ry="7" fill="#c4c4c4" stroke="#a9a9a9" stroke-width="1.2"/>
<text x="2182.5" y="1191.6" font-size="21.4" text-anchor="end" fill="#000">Client Review</text>
<text x="2155.3" y="1237.1" font-size="21.4" fill="#000">Final Site Production</text>
<path d="M2195.5,1267.5 L2209.5,1274.5 L2195.5,1281.5 M2208.6,1267.5 L2222.6,1274.5 L2208.6,1281.5" fill="none" stroke="#2f6fe0" stroke-width="2.6" stroke-linejoin="miter"/>
<path d="M2195.5,1313.0 L2209.5,1320.0 L2195.5,1327.0 M2208.6,1313.0 L2222.6,1320.0 L2208.6,1327.0" fill="none" stroke="#2f6fe0" stroke-width="2.6" stroke-linejoin="miter"/>
<path d="M2195.5,1358.5 L2209.5,1365.5 L2195.5,1372.5 M2208.6,1358.5 L2222.6,1365.5 L2208.6,1372.5" fill="none" stroke="#2f6fe0" stroke-width="2.6" stroke-linejoin="miter"/>
<path d="M2195.5,1403.5 L2209.5,1410.5 L2195.5,1417.5 M2208.6,1403.5 L2222.6,1410.5 L2208.6,1417.5" fill="none" stroke="#2f6fe0" stroke-width="2.6" stroke-linejoin="miter"/>
<path d="M2195.5,1449.0 L2209.5,1456.0 L2195.5,1463.0 M2208.6,1449.0 L2222.6,1456.0 L2208.6,1463.0" fill="none" stroke="#2f6fe0" stroke-width="2.6" stroke-linejoin="miter"/>
<path d="M2195.5,1494.5 L2209.5,1501.5 L2195.5,1508.5 M2208.6,1494.5 L2222.6,1501.5 L2208.6,1508.5" fill="none" stroke="#2f6fe0" stroke-width="2.6" stroke-linejoin="miter"/>
<path d="M2195.5,1539.5 L2209.5,1546.5 L2195.5,1553.5 M2208.6,1539.5 L2222.6,1546.5 L2208.6,1553.5" fill="none" stroke="#2f6fe0" stroke-width="2.6" stroke-linejoin="miter"/>
<path d="M2195.5,1600.0 L2209.5,1607.0 L2195.5,1614.0 M2208.6,1600.0 L2222.6,1607.0 L2208.6,1614.0" fill="none" stroke="#2f6fe0" stroke-width="2.6" stroke-linejoin="miter"/>
<path d="M2195.5,1660.5 L2209.5,1667.5 L2195.5,1674.5 M2208.6,1660.5 L2222.6,1667.5 L2208.6,1674.5" fill="none" stroke="#2f6fe0" stroke-width="2.6" stroke-linejoin="miter"/>
<path d="M2195.5,1705.6 L2209.5,1712.6 L2195.5,1719.6 M2208.6,1705.6 L2222.6,1712.6 L2208.6,1719.6" fill="none" stroke="#2f6fe0" stroke-width="2.6" stroke-linejoin="miter"/>
<path d="M988.3,397.2 L988.3,442.0 Q988.3,447.0 993.3,447.0 L1013,447.0" fill="none" stroke="#000" stroke-width="1.3" marker-end="url(#arr)"/>
<path d="M1041.7,447.0 L1056.4,447.0 Q1061.4,447.0 1061.4,452.0 L1061.4,479.3 Q1061.4,484.3 1056.4,484.3 L1021.8,484.3 Q1016.8,484.3 1016.8,489.3 L1016.8,502.5 Q1016.8,507.5 1021.8,507.5 L1041.2,507.5" fill="none" stroke="#000" stroke-width="1.3" marker-end="url(#arr)"/>
<path d="M1069.9,507.5 L1084.3,507.5 Q1089.3,507.5 1089.3,512.5 L1089.3,536.5" fill="none" stroke="#000" stroke-width="1.3" marker-end="url(#arr)"/>
<path d="M1126.3,552.5 L1140.8,552.5 Q1145.8,552.5 1145.8,557.5 L1145.8,570.4 Q1145.8,575.4 1140.8,575.4 L1106.3,575.4 Q1101.3,575.4 1101.3,580.4 L1101.3,592.5 Q1101.3,597.5 1106.3,597.5 L1125.8,597.5" fill="none" stroke="#000" stroke-width="1.3" marker-end="url(#arr)"/>
<path d="M1154.5,597.5 L1168.6,597.5 Q1173.6,597.5 1173.6,602.5 L1173.6,627.6" fill="none" stroke="#000" stroke-width="1.3" marker-end="url(#arr)"/>
<path d="M1267.3,643.0 L1282.2,643.0 Q1287.2,643.0 1287.2,648.0 L1287.2,672.4" fill="none" stroke="#000" stroke-width="1.3" marker-end="url(#arr)"/>
<path d="M1436.6,688.5 L1450.9,688.5 Q1455.9,688.5 1455.9,693.5 L1455.9,717.8" fill="none" stroke="#000" stroke-width="1.3" marker-end="url(#arr)"/>
<path d="M1493.0,733.5 L1508.2,733.5 Q1513.2,733.5 1513.2,738.5 L1513.2,763.0" fill="none" stroke="#000" stroke-width="1.3" marker-end="url(#arr)"/>
<path d="M1605.8,779.0 L1620.0,779.0 Q1625.0,779.0 1625.0,784.0 L1625.0,795.5 Q1625.0,800.5 1620.0,800.5 L1585.2,800.5 Q1580.2,800.5 1580.2,805.5 L1580.2,819.5 Q1580.2,824.5 1585.2,824.5 L1605.3,824.5" fill="none" stroke="#000" stroke-width="1.3" marker-end="url(#arr)"/>
<path d="M1634.1,824.5 L1649.2,824.5 Q1654.2,824.5 1654.2,829.5 L1654.2,853.6" fill="none" stroke="#000" stroke-width="1.3" marker-end="url(#arr)"/>
<path d="M1700.5,327.9 L1715,327.9 Q1720,327.9 1720,332.9 L1720,886.8 Q1720,891.8 1715,891.8 L1656.2,891.8 Q1651.2,891.8 1651.2,896.8 L1651.2,910.0 Q1651.2,915.0 1656.2,915.0 L1674.8,915.0" fill="none" stroke="#000" stroke-width="1.3" marker-end="url(#arr)"/>
<path d="M1768,926 L1768,949.5 Q1768,954.5 1773,954.5 L1792.5,954.5" fill="none" stroke="#000" stroke-width="1.3" marker-end="url(#arr)"/>
<path d="M1916.2,1012.0 L1931.3,1012.0 Q1936.3,1012.0 1936.3,1017.0 L1936.3,1056.8" fill="none" stroke="#000" stroke-width="1.3" marker-end="url(#arr)"/>
<path d="M2029.0,1072.5 L2044.5,1072.5 Q2049.5,1072.5 2049.5,1077.5 L2049.5,1117.2" fill="none" stroke="#000" stroke-width="1.3" marker-end="url(#arr)"/>
</g>
</g>
<path d="M1947,143.5 Q1957,153 1959.4,160 L1959.8,169.7 L1964.3,169.7 L1965.6,159 Q1968,152.5 1976.8,143.5 Z" fill="#e8e8e8"/>
<circle cx="1971.5" cy="155.2" r="5" fill="none" stroke="#e8e8e8" stroke-width="2.4"/>
<path d="M1965.5,158 L1965.6,152" stroke="#e8e8e8" stroke-width="2.5"/>
<ellipse cx="1961.8" cy="141.9" rx="15" ry="5" fill="#2e2e31" stroke="#e8e8e8" stroke-width="2.4"/>
<g fill="#e8e8e8"><rect x="2021.8" y="136.1" width="2.2" height="33.6"/><rect x="2021.8" y="136.1" width="16" height="2.2"/><rect x="2021.8" y="167.5" width="16" height="2.2"/><rect x="2027.9" y="142" width="34.2" height="5.9"/><rect x="2027.9" y="150.2" width="18.1" height="5.6"/><rect x="2027.9" y="158" width="26" height="5.7"/></g>
<g transform="translate(2121,155.5) rotate(45)"><rect x="-2.8" y="-24.5" width="5.6" height="18" rx="2.8" fill="#e8e8e8"/><path d="M-2.8,-8 L2.8,-8 L3.4,-5 L7,-2.8 L7,0 L-7,0 L-7,-2.8 L-3.4,-5 Z" fill="#e8e8e8"/><path d="M-8.2,1.8 L8.2,1.8 L8.2,15.5 Q8.2,17.2 6.5,17.2 L3.2,17.2 L3.2,12.2 Q1.6,10.6 0,12.2 L0,17.2 L-6.5,17.2 Q-8.2,17.2 -8.2,15.5 Z" fill="#9a9a9a"/></g>
<g transform="translate(2200.5,157) rotate(45)"><rect x="-4.6" y="-8" width="9.2" height="28" rx="4.6" fill="#e8e8e8"/><circle cx="0" cy="-13" r="10.8" fill="#e8e8e8"/><circle cx="1.5" cy="-20.3" r="6" fill="#2e2e31"/><rect x="-1.3" y="-32" width="6" height="11" fill="#2e2e31" transform="rotate(12 1.5 -20.3)"/><circle cx="0" cy="15.2" r="2.6" fill="#2e2e31"/></g>
<rect x="2274.8" y="186.2" width="572.8" height="71.4" rx="8" fill="#686868"/>
<path d="M2282.8,186.2 L2369.5,186.2 L2369.5,257.6 L2282.8,257.6 Q2274.8,257.6 2274.8,249.6 L2274.8,194.2 Q2274.8,186.2 2282.8,186.2 Z" fill="#2f69d8"/>
<rect x="2306" y="210" width="31.8" height="31" rx="1.5" fill="#f4f6fb" stroke="#dfe6f5" stroke-width="1"/>
<rect x="2308.5" y="212.5" width="26.8" height="26" fill="none" stroke="#2f69d8" stroke-width="1"/>
<path d="M2316.7,214 L2316.7,208.5 L2319.5,208.5 Q2320,203 2322.7,203 Q2325.4,203 2325.9,208.5 L2328.7,208.5 L2328.7,214 Z" fill="#f4f6fb"/>
<circle cx="2322.7" cy="207" r="1.5" fill="#2f69d8"/>
<path d="M2313,226.5 L2320.8,233.5 L2331.2,218.5" fill="none" stroke="#2f69d8" stroke-width="3.6" stroke-linecap="round" stroke-linejoin="round"/>
<g transform="translate(2419,223) rotate(-45)"><rect x="-23.5" y="-6.5" width="47" height="13" rx="6.5" fill="none" stroke="#dcdcdc" stroke-width="3"/><rect x="-9" y="-2.2" width="18" height="4.4" rx="2.2" fill="#a9a9a9"/><rect x="-4" y="-9" width="3" height="4" fill="#686868"/><rect x="1" y="5" width="3" height="4" fill="#686868"/></g>
<g fill="#dcdcdc"><rect x="2503" y="205.3" width="18" height="4.6" rx="2.3"/><rect x="2500" y="212.6" width="20" height="4.6" rx="2.3"/><rect x="2499" y="220.4" width="18" height="4.6" rx="2.3"/><rect x="2498" y="228.5" width="14" height="4.6" rx="2.3"/><rect x="2497.7" y="236.3" width="15" height="4.6" rx="2.3"/></g>
<circle cx="2525.2" cy="231.5" r="12.3" fill="#686868"/><circle cx="2525.2" cy="231.5" r="10.6" fill="#dcdcdc"/>
<text x="2525.2" y="238.6" font-size="19" font-weight="bold" fill="#686868" text-anchor="middle">$</text>
<path d="M2610.5,206.6 A17,17 0 1 0 2624,208.5" fill="none" stroke="#dcdcdc" stroke-width="4"/><path d="M2613.5,200.5 L2624,206.5 L2613.5,213 Z" fill="#dcdcdc"/>
<g stroke="#dcdcdc" stroke-width="2.4" fill="none"><circle cx="2609" cy="218" r="2.4"/><circle cx="2619.5" cy="229" r="2.4"/><path d="M2618.5,215.5 L2609.5,231.5"/></g>
<g fill="#dcdcdc"><rect x="2691.8" y="205.1" width="25" height="7.2" rx="3.6"/><rect x="2691.8" y="219.5" width="25" height="7.2" rx="3.6"/><rect x="2691.8" y="233.9" width="25" height="7.2" rx="3.6"/>
<path d="M2720,205.1 L2724,205.1 A3.6,3.6 0 0 1 2724,212.3 L2720,212.3 Z"/>
<path d="M2720,219.5 L2724,219.5 A3.6,3.6 0 0 1 2724,226.7 L2720,226.7 Z"/>
<path d="M2720,233.9 L2724,233.9 A3.6,3.6 0 0 1 2724,241.1 L2720,241.1 Z"/>
</g>
<rect x="2789" y="204.7" width="36" height="36" rx="1.5" fill="#dcdcdc"/>
<path d="M2794.5,236.3 L2796.3,229.3 L2815.8,209.8 L2821,215 L2801.5,234.5 Z" fill="#686868"/><path d="M2814,211.6 L2819.2,216.8" stroke="#dcdcdc" stroke-width="1.2"/>
<path d="M2283.5,291.2 L2297.5,299.5 L2283.5,307.8 Z" fill="#e8e8e8"/>
<text x="2314.8" y="308.2" font-size="23" font-weight="bold" letter-spacing="0.2" fill="#dedede">Title</text>
<rect x="2442.0" y="280.0" width="406.7" height="35.5" fill="#38383a" stroke="#4a4a4c" stroke-width="1.2"/>
<rect x="2442.0" y="280.0" width="406.7" height="1.2" fill="#262628"/>
<text x="2449.4" y="308.2" font-size="22.6" letter-spacing="0.35" fill="#e6e6e6" stroke="#e6e6e6" stroke-width="0.3">Client-Website</text>
<rect x="2276" y="334.7" width="572" height="2" fill="url(#sepg)"/>
<path d="M2283.5,366.2 L2297.5,374.5 L2283.5,382.8 Z" fill="#e8e8e8"/>
<text x="2314.8" y="382.2" font-size="23" font-weight="bold" letter-spacing="0.2" fill="#dedede">Work</text>
<rect x="2442.0" y="357.0" width="406.7" height="35.9" fill="#38383a" stroke="#4a4a4c" stroke-width="1.2"/>
<rect x="2442.0" y="357.0" width="406.7" height="1.2" fill="#262628"/>
<text x="2314.8" y="438.4" font-size="22.6" letter-spacing="0.35" fill="#dedede" stroke="#dedede" stroke-width="0.3">Duration</text>
<rect x="2442.0" y="412.8" width="406.7" height="35.9" fill="#38383a" stroke="#4a4a4c" stroke-width="1.2"/>
<rect x="2442.0" y="412.8" width="406.7" height="1.2" fill="#262628"/>
<text x="2314.8" y="494.2" font-size="22.6" letter-spacing="0.35" fill="#dedede" stroke="#dedede" stroke-width="0.3">Milestone</text>
<rect x="2441" y="474.3" width="24" height="23.2" rx="4" fill="#49494b" stroke="#3c3c3e" stroke-width="1"/>
<rect x="2276" y="522.4" width="572" height="2" fill="url(#sepg)"/>
<text x="2314.8" y="569.6" font-size="22.6" letter-spacing="0.35" fill="#dedede" stroke="#dedede" stroke-width="0.3">Start</text>
<rect x="2442.7" y="546.4" width="405.3" height="31.6" rx="5" fill="#6a6a6a"/>
<path d="M2819.8,546.4 L2843,546.4 Q2848,546.4 2848,551.4 L2848,573.0 Q2848,578.0 2843,578.0 L2819.8,578.0 Z" fill="#2f69d8"/>
<path d="M2828,559.2 L2834,553.2 L2840,559.2 M2828,565.2 L2834,571.2 L2840,565.2" fill="none" stroke="#fff" stroke-width="2.2"/>
<text x="2458.0" y="569.6" font-size="22.6" letter-spacing="0.35" fill="#ececec" stroke="#ececec" stroke-width="0.3">Earliest</text>
<text x="2314.8" y="625.4" font-size="22.6" letter-spacing="0.35" fill="#dedede" stroke="#dedede" stroke-width="0.3">Earliest</text>
<rect x="2442.7" y="600.5" width="405.3" height="30.9" fill="#343436" stroke="#4a4a4c" stroke-width="1.2"/>
<path d="M2818,600.5 L2843,600.5 Q2848,600.5 2848,605.5 L2848,626.4 Q2848,631.4 2843,631.4 L2818,631.4 Z" fill="#2f69d8"/>
<path d="M2827,612.5 L2833,618.5 L2839,612.5" fill="none" stroke="#fff" stroke-width="2.2"/>
<text x="2449.4" y="625.4" font-size="22.6" letter-spacing="0.35" fill="#ececec" stroke="#ececec" stroke-width="0.3">October 29, 2019 at 12:00 AM</text>
<text x="2314.8" y="681.9" font-size="22.6" letter-spacing="0.35" fill="#dedede" stroke="#dedede" stroke-width="0.3">End</text>
<rect x="2442.7" y="658.0" width="405.3" height="31.5" rx="5" fill="#6a6a6a"/>
<path d="M2819.8,658.0 L2843,658.0 Q2848,658.0 2848,663.0 L2848,684.5 Q2848,689.5 2843,689.5 L2819.8,689.5 Z" fill="#2f69d8"/>
<path d="M2828,670.8 L2834,664.8 L2840,670.8 M2828,676.8 L2834,682.8 L2840,676.8" fill="none" stroke="#fff" stroke-width="2.2"/>
<text x="2458.0" y="681.1" font-size="22.6" letter-spacing="0.35" fill="#ececec" stroke="#ececec" stroke-width="0.3">Unrestricted</text>
<text x="2314.8" y="737.4" font-size="22.6" letter-spacing="0.35" fill="#dedede" stroke="#dedede" stroke-width="0.3">Alignment</text>
<rect x="2442.7" y="714.0" width="405.3" height="31.7" rx="5" fill="#6a6a6a"/>
<path d="M2819.8,714.0 L2843,714.0 Q2848,714.0 2848,719.0 L2848,740.7 Q2848,745.7 2843,745.7 L2819.8,745.7 Z" fill="#2f69d8"/>
<path d="M2828,726.9 L2834,720.9 L2840,726.9 M2828,732.9 L2834,738.9 L2840,732.9" fill="none" stroke="#fff" stroke-width="2.2"/>
<text x="2458.0" y="737.3" font-size="22.6" letter-spacing="0.35" fill="#ececec" stroke="#ececec" stroke-width="0.3">ASAP</text>
<rect x="2276" y="766.3" width="572" height="2" fill="url(#sepg)"/>
<path d="M2283.5,797.7 L2297.5,806.0 L2283.5,814.3 Z" fill="#e8e8e8"/>
<text x="2314.8" y="814.1" font-size="23" font-weight="bold" letter-spacing="0.2" fill="#dedede">Advanced</text>
<rect x="2276" y="842.7" width="572" height="2" fill="url(#sepg)"/>
<path d="M2283,876 L2300,876 L2291.5,889.6 Z" fill="#e8e8e8"/>
<text x="2314.8" y="889.6" font-size="23" font-weight="bold" letter-spacing="0.2" fill="#dedede">Expected</text>
<text x="2314.8" y="946.0" font-size="22.6" letter-spacing="0.35" fill="#dedede" stroke="#dedede" stroke-width="0.3">Status</text>
<ellipse cx="2450" cy="937.3" rx="8" ry="6.4" fill="#86bb5b"/>
<text x="2465.3" y="946.0" font-size="22.6" letter-spacing="0.35" fill="#dedede" stroke="#dedede" stroke-width="0.3">On time</text>
<text x="2314.8" y="1001.8" font-size="22.6" letter-spacing="0.35" fill="#dedede" stroke="#dedede" stroke-width="0.3">Start</text>
<text x="2442.0" y="1001.8" font-size="22.6" letter-spacing="0.35" fill="#dedede" stroke="#dedede" stroke-width="0.3">Nov 2, 2019 at 12:00 AM</text>
<text x="2314.8" y="1057.3" font-size="22.6" letter-spacing="0.35" fill="#dedede" stroke="#dedede" stroke-width="0.3">End</text>
<text x="2442.0" y="1057.3" font-size="22.6" letter-spacing="0.35" fill="#dedede" stroke="#dedede" stroke-width="0.3">Dec 18, 2019 at 3:00 PM</text>
<text x="2314.8" y="1113.8" font-size="22.6" letter-spacing="0.35" fill="#dedede" stroke="#dedede" stroke-width="0.3">Work</text>
<text x="2442.0" y="1113.8" font-size="22.6" letter-spacing="0.35" fill="#dedede" stroke="#dedede" stroke-width="0.3">1.92 months</text>
<text x="2314.8" y="1169.6" font-size="22.6" letter-spacing="0.35" fill="#dedede" stroke="#dedede" stroke-width="0.3">Duration</text>
<text x="2442.0" y="1169.6" font-size="22.6" letter-spacing="0.35" fill="#dedede" stroke="#dedede" stroke-width="0.3">1.64 months (1.55 emonths)</text>
<text x="2314.8" y="1225.0" font-size="22.6" letter-spacing="0.35" fill="#dedede" stroke="#dedede" stroke-width="0.3">Utilization</text>
<g stroke="#1c1c1e" stroke-width="3.2" fill="#38383a" stroke-linejoin="round">
<path d="M2418,1630.5 L2467,1630.5 Q2472,1630.5 2472,1636 Q2472,1640 2468,1642.5 L2418,1642.5 Q2414,1640 2414,1636 Q2414,1630.5 2418,1630.5 Z"/>
<rect x="2419" y="1643.5" width="49" height="12" rx="4"/>
<path d="M2465.5,1654 L2473,1661.5 L2465.5,1669 L2458,1661.5 Z"/>
<ellipse cx="2443.5" cy="1677" rx="29.5" ry="12.8"/>
<ellipse cx="2443.5" cy="1674" rx="22" ry="8" fill="#1c1c1e" stroke="none"/>
<path d="M2429,1673 Q2426,1650 2430,1636 Q2433,1628 2438,1630 Q2450,1642 2457,1673 Q2443,1679 2429,1673 Z"/>
<path d="M2432.5,1669 Q2431,1650 2434,1638 Q2446,1648 2452,1669 Q2442,1672 2432.5,1669 Z" fill="#1c1c1e" stroke="none"/>
</g>
<text x="2492.6" y="1672.7" font-size="36" font-weight="bold" fill="#1d1d1f">Merlin Project</text>
<path d="M0,0 L9,0 A9,9 0 0 0 0,9 Z" fill="#3f6b46"/>
<path d="M2872,0 L2863,0 A9,9 0 0 1 2872,9 Z" fill="#3f6b46"/>
<path d="M0,1754 L9,1754 A9,9 0 0 1 0,1745 Z" fill="#3f6b46"/>
<path d="M2872,1754 L2863,1754 A9,9 0 0 0 2872,1745 Z" fill="#3f6b46"/>
</svg></body></html>
